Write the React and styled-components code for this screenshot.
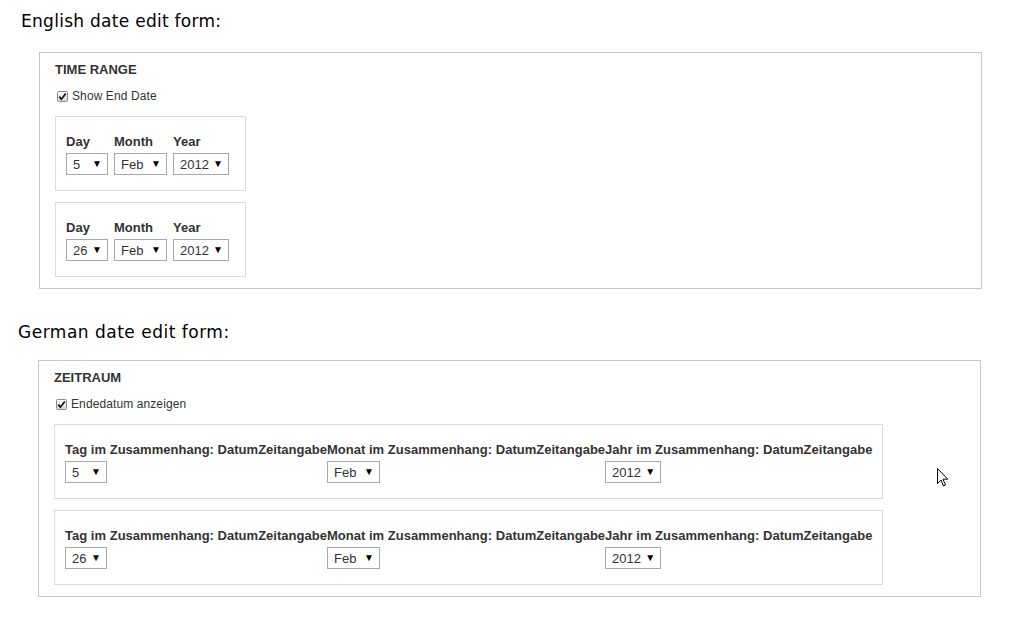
import React from "react";
import styled, { createGlobalStyle } from "styled-components";

const GlobalStyle = createGlobalStyle`
  html, body { margin: 0; padding: 0; background: #fff; }
  body { font-family: "Liberation Sans", Arial, sans-serif; color: #333; }
`;

const Page = styled.div`
  width: 1010px;
  height: 618px;
  position: relative;
  overflow: hidden;
  padding-top: 11px;
  box-sizing: border-box;
`;

const Section = styled.section`
  margin-top: ${(p) => p.$top}px;
`;

const Heading = styled.h2`
  margin: 0 0 0 ${(p) => p.$indent}px;
  font-family: "DejaVu Sans", sans-serif;
  font-weight: normal;
  font-size: 17px;
  line-height: 20px;
  letter-spacing: ${(p) => p.$spacing}px;
  color: #000;
`;

const Fieldset = styled.div`
  margin: ${(p) => p.$gap}px 0 0 ${(p) => p.$left}px;
  width: 943px;
  box-sizing: border-box;
  border: 1px solid #c8c8c8;
  padding: 10px 15px 11px 15px;
`;

const Title = styled.div`
  font-size: 13px;
  font-weight: bold;
  line-height: 14px;
  color: #333;
  text-transform: uppercase;
`;

const CheckRow = styled.label`
  display: flex;
  align-items: center;
  gap: 4px;
  margin: 12px 0 13px 2px;
  font-size: 12px;
  letter-spacing: 0.1px;
  line-height: 14px;
  color: #333;
`;

const DateBox = styled.div`
  display: flex;
  align-items: flex-start;
  width: fit-content;
  border: 1px solid #dcdcdc;
  padding: 17px 10px 15px 10px;
  & + & { margin-top: 11px; }
`;

const Field = styled.div`
  display: flex;
  flex-direction: column;
  align-items: flex-start;
`;

const FieldLabel = styled.span`
  font-size: 13px;
  font-weight: bold;
  line-height: 15px;
  letter-spacing: 0.02px;
  color: #333;
  white-space: nowrap;
  margin-bottom: 4px;
`;

const Select = styled.div`
  display: flex;
  align-items: center;
  justify-content: space-between;
  box-sizing: border-box;
  width: ${(p) => p.$width}px;
  height: 22px;
  margin-right: 6px;
  padding: 0 5px 0 6px;
  border: 1px solid #a9a9a9;
  background: #fff;
  font-size: 13px;
  color: #333;
`;

const Arrow = styled.span`
  font-size: 10px;
  color: #000;
  line-height: 1;
`;

const Cursor = styled.svg`
  position: absolute;
  left: 937px;
  top: 468px;
`;

function CheckIcon() {
  return (
    <svg width="11" height="11" viewBox="0 0 11 11">
      <defs>
        <linearGradient id="cbg" x1="0" y1="0" x2="0" y2="1">
          <stop offset="0" stopColor="#fdfdfd" />
          <stop offset="1" stopColor="#d8d8d8" />
        </linearGradient>
      </defs>
      <rect x="0.5" y="0.5" width="10" height="10" rx="1" fill="url(#cbg)" stroke="#8a8a8a" />
      <path d="M2.3 5.6 L4.4 8.2 L8.8 2.4" fill="none" stroke="#111" strokeWidth="1.7" />
    </svg>
  );
}

function DateSelect({ width, value }) {
  return (
    <Select $width={width}>
      <span>{value}</span>
      <Arrow>▼</Arrow>
    </Select>
  );
}

function DateRow({ labels, day }) {
  const values = [
    { w: 42, v: day },
    { w: 53, v: "Feb" },
    { w: 56, v: "2012" },
  ];
  return (
    <DateBox>
      {labels.map((l, i) => (
        <Field key={l}>
          <FieldLabel>{l}</FieldLabel>
          <DateSelect width={values[i].w} value={values[i].v} />
        </Field>
      ))}
    </DateBox>
  );
}

function Form({ title, check, labels, left, gap }) {
  return (
    <Fieldset $left={left} $gap={gap}>
      <Title>{title}</Title>
      <CheckRow>
        <CheckIcon />
        {check}
      </CheckRow>
      <DateRow labels={labels} day="5" />
      <DateRow labels={labels} day="26" />
    </Fieldset>
  );
}

export default function App() {
  return (
    <>
      <GlobalStyle />
      <Page>
        <Section $top={0}>
          <Heading $indent={21} $spacing={0.28}>English date edit form:</Heading>
          <Form
            left={39}
            gap={21}
            title="Time Range"
            check="Show End Date"
            labels={["Day", "Month", "Year"]}
          />
        </Section>
        <Section $top={33}>
          <Heading $indent={18} $spacing={0.5}>German date edit form:</Heading>
          <Form
            left={38}
            gap={18}
            title="Zeitraum"
            check="Endedatum anzeigen"
            labels={[
              "Tag im Zusammenhang: DatumZeitangabe",
              "Monat im Zusammenhang: DatumZeitangabe",
              "Jahr im Zusammenhang: DatumZeitangabe",
            ]}
          />
        </Section>
        <Cursor width="12" height="20" viewBox="0 0 12 20">
          <path
            d="M0.5 0.5 L0.5 15.5 L4 12 L6.5 18 L8.5 17 L6 11.2 L10.8 11.2 Z"
            fill="#fff"
            stroke="#000"
            strokeWidth="1"
            strokeLinejoin="miter"
          />
        </Cursor>
      </Page>
    </>
  );
}
